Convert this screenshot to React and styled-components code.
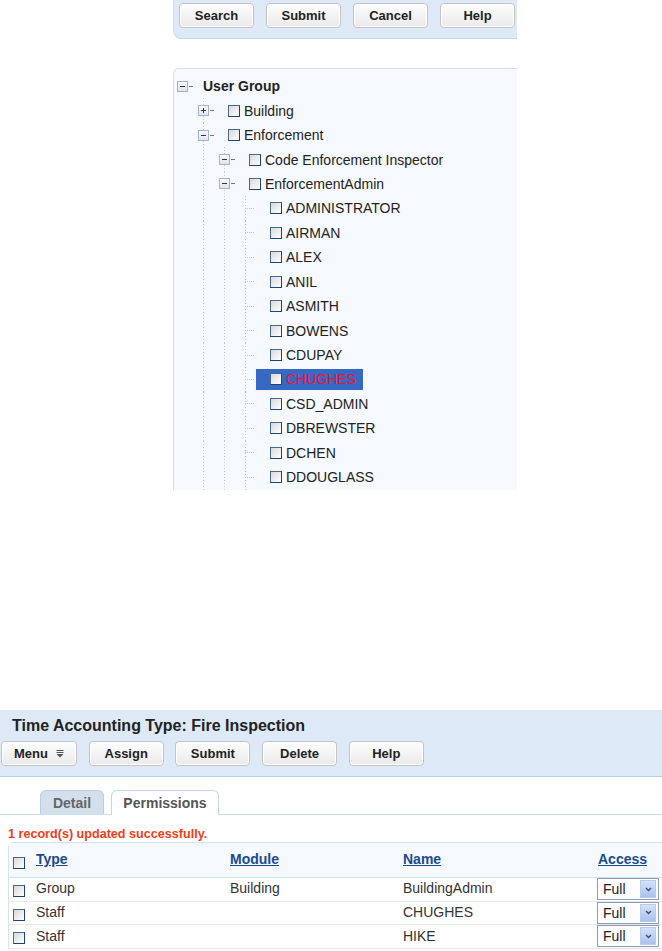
import React from "react";
import styled, { createGlobalStyle } from "styled-components";

const GlobalStyle = createGlobalStyle`
  body {
    margin: 0;
    background: #ffffff;
    font-family: "Liberation Sans", Arial, sans-serif;
  }
  * { box-sizing: border-box; }
`;

const Page = styled.div`
  width: 662px;
  height: 951px;
  overflow: hidden;
  display: flex;
  flex-direction: column;
`;

// top button strip
const SearchBar = styled.div`
  margin-left: 173px;
  width: 344px;
  height: 39px;
  padding: 3px 0 0 5px;
  display: flex;
  gap: 12px;
  background: #dde9f6;
  border-left: 1px solid #cfdded;
  border-bottom: 1px solid #c6d7eb;
  border-bottom-left-radius: 8px;
`;

const Button = styled.button`
  width: ${(p) => p.$w || 75}px;
  height: 25px;
  flex-shrink: 0;
  padding: 0;
  display: flex;
  align-items: center;
  justify-content: center;
  gap: 8px;
  border: 1px solid #c4c4c4;
  border-radius: 4px;
  background: linear-gradient(#fdfdfd, #eaeaea);
  box-shadow: inset 0 0 0 1px #ffffff;
  font: bold 13px "Liberation Sans", Arial, sans-serif;
  color: #222;
`;

// tree
const TreePanel = styled.div`
  margin: 29px 0 0 173px;
  width: 344px;
  height: 422px;
  overflow: hidden;
  padding: 5px 0 0 3px;
  background: #f6f9fd;
  border-top: 1px solid #d3dfec;
  border-left: 1px solid #d3dfec;
  border-top-left-radius: 6px;
`;

const TreeRow = styled.div`
  display: flex;
  align-items: center;
  height: 24.45px;
`;

const vLine = "repeating-linear-gradient(to bottom, #c3c7cd 0 1px, transparent 1px 3px)";
const hLine = "repeating-linear-gradient(to right, #c3c7cd 0 1px, transparent 1px 2px)";

const Indent = styled.span`
  width: 21px;
  height: 100%;
  flex-shrink: 0;
  background-image: ${(p) => (p.$line ? vLine : "none")};
  background-size: 1px 100%;
  background-position: 5px 0;
  background-repeat: no-repeat;
`;

const Toggle = styled.span`
  width: 16px;
  height: 100%;
  flex-shrink: 0;
  display: flex;
  align-items: center;
  background-image: ${(p) =>
    p.$leaf ? `${vLine}, ${hLine}` : p.$line ? vLine : "none"};
  background-size: 1px 100%, 9px 1px;
  background-position: 5px 0, 5px 50%;
  background-repeat: no-repeat;
`;

const Item = styled.span`
  display: flex;
  align-items: center;
  gap: 4px;
  height: 21px;
  padding: 0 7px 0 ${(p) => p.$pad}px;
  background: ${(p) => (p.$selected ? "#3768c4" : "transparent")};
  color: ${(p) => (p.$selected ? "#ee1430" : "#222")};
  font-size: 14px;
  font-weight: ${(p) => (p.$bold ? "bold" : "normal")};
  white-space: nowrap;
`;

const Check = styled.span`
  display: inline-block;
  width: 12px;
  height: 12px;
  flex-shrink: 0;
  margin-top: ${(p) => p.$dy || 0}px;
  border: 1px solid;
  border-color: #46698f #1c4474 #1c4474 #46698f;
  background: linear-gradient(135deg, #d9d9d9, #ffffff);
`;

function Expander({ plus }) {
  return (
    <svg width="16" height="11" viewBox="0 0 16 11">
      <defs>
        <linearGradient id="exg" x1="0" y1="0" x2="0" y2="1">
          <stop offset="0" stopColor="#ffffff" />
          <stop offset="1" stopColor="#dbe3ee" />
        </linearGradient>
      </defs>
      <rect x="0.5" y="0.5" width="10" height="10" fill="url(#exg)" stroke="#a3b4ce" />
      <path d="M3 5.5h5" stroke="#333" />
      {plus && <path d="M5.5 3v5" stroke="#333" />}
      <path d="M12 5.5h4" stroke="#777" />
    </svg>
  );
}

const leaves = [
  "ADMINISTRATOR", "AIRMAN", "ALEX", "ANIL", "ASMITH", "BOWENS", "CDUPAY",
  "CHUGHES", "CSD_ADMIN", "DBREWSTER", "DCHEN", "DDOUGLASS",
];

const tree = [
  { level: 0, label: "User Group", kind: "minus" },
  { level: 1, label: "Building", kind: "plus" },
  { level: 1, label: "Enforcement", kind: "minus" },
  { level: 2, label: "Code Enforcement Inspector", kind: "minus" },
  { level: 2, label: "EnforcementAdmin", kind: "minus" },
  ...leaves.map((l) => ({ level: 3, label: l, kind: "leaf", selected: l === "CHUGHES" })),
];

// record header
const RecordHeader = styled.div`
  margin-top: 220px;
  height: 67px;
  flex-shrink: 0;
  padding: 6px 0 0 1px;
  background: #dde9f6;
  border-bottom: 1px solid #b6cfea;
`;

const RecordTitle = styled.div`
  padding-left: 11px;
  font-size: 16px;
  line-height: 20px;
  font-weight: bold;
  color: #222;
`;

const Toolbar = styled.div`
  display: flex;
  gap: 11.7px;
  margin-top: 5px;
`;

const TabStrip = styled.div`
  margin-top: 13px;
  height: 25px;
  flex-shrink: 0;
  display: flex;
  align-items: flex-end;
  gap: 7px;
  padding-left: 40px;
  border-bottom: 1px solid #cbdcee;
`;

const Tab = styled.div`
  width: ${(p) => p.$w}px;
  height: ${(p) => (p.$active ? 25 : 24)}px;
  margin-bottom: ${(p) => (p.$active ? -1 : 0)}px;
  display: flex;
  align-items: center;
  justify-content: center;
  border: 1px solid ${(p) => (p.$active ? "#c2d6ec" : "#b9cde3")};
  border-bottom: none;
  border-radius: 6px 6px 0 0;
  background: ${(p) => (p.$active ? "#ffffff" : "#d3dfec")};
  font-size: 14px;
  font-weight: bold;
  color: ${(p) => (p.$active ? "#555" : "#666")};
`;

const Message = styled.div`
  margin-top: 11px;
  padding-left: 8px;
  font-size: 12.6px;
  line-height: 16px;
  font-weight: bold;
  color: #f23c17;
`;

const Table = styled.div`
  margin-left: 8px;
  border-top: 1px solid #d5e2ef;
  border-left: 1px solid #d5e2ef;
  border-top-left-radius: 6px;
`;

const Row = styled.div`
  display: grid;
  grid-template-columns: 22px 194px 173px 195px 1fr;
  height: ${(p) => (p.$head ? "35px" : "23.7px")};
  background: ${(p) => (p.$head ? "#f6f9fd" : "#ffffff")};
  border-bottom: 1px solid ${(p) => (p.$head ? "#d3e0ee" : "#e3e8ee")};
`;

const Cell = styled.div`
  display: flex;
  align-items: ${(p) => (p.$top ? "flex-start" : "center")};
  padding-left: ${(p) => (p.$pad != null ? p.$pad : 5)}px;
  padding-bottom: ${(p) => (p.$top ? 0 : 2)}px;
  font-size: 14px;
  color: #333;
  white-space: nowrap;
`;

const HeadLink = styled.a`
  font-weight: bold;
  font-size: 14px;
  color: #1a4b8e;
  text-decoration: underline;
`;

const SelectBox = styled.div`
  width: 62px;
  height: 22px;
  display: flex;
  align-items: center;
  justify-content: space-between;
  padding: 0 2px 0 5px;
  border: 1px solid #8d9db3;
  background: #ffffff;
  font-size: 14px;
  color: #222;
`;

const SelectArrow = styled.span`
  width: 16px;
  height: 18px;
  display: flex;
  align-items: center;
  justify-content: center;
  border: 1px solid #b9cbeb;
  background: linear-gradient(#d4e1f8, #aac2ef);
`;

function MenuGlyph() {
  return (
    <svg width="8" height="8" viewBox="0 0 8 8">
      <path d="M0.5 0.5h7M0.5 2.5h7" stroke="#555" />
      <path d="M0.5 4h7L4 7.5z" fill="#555" />
    </svg>
  );
}

function Chevron() {
  return (
    <svg width="7" height="5" viewBox="0 0 7 5">
      <path d="M1 1l2.5 2.5L6 1" stroke="#3d4f70" strokeWidth="1.4" fill="none" />
    </svg>
  );
}

const rows = [
  { type: "Group", module: "Building", name: "BuildingAdmin" },
  { type: "Staff", module: "", name: "CHUGHES" },
  { type: "Staff", module: "", name: "HIKE" },
];

export default function App() {
  return (
    <Page>
      <GlobalStyle />
      <SearchBar>
        <Button>Search</Button>
        <Button>Submit</Button>
        <Button>Cancel</Button>
        <Button>Help</Button>
      </SearchBar>

      <TreePanel>
        {tree.map((n, i) => (
          <TreeRow key={i}>
            {Array.from({ length: n.level }).map((_, k) => (
              <Indent key={k} $line={k >= 1} />
            ))}
            <Toggle $line={n.level >= 1} $leaf={n.kind === "leaf"}>
              {n.kind !== "leaf" && <Expander plus={n.kind === "plus"} />}
            </Toggle>
            <Item $pad={n.level === 0 ? 10 : 14} $bold={n.level === 0} $selected={n.selected}>
              {n.level > 0 && <Check />}
              {n.label}
            </Item>
          </TreeRow>
        ))}
        <TreeRow>
          <Indent />
          <Indent $line />
          <Indent $line />
          <Toggle $line />
        </TreeRow>
      </TreePanel>

      <RecordHeader>
        <RecordTitle>Time Accounting Type: Fire Inspection</RecordTitle>
        <Toolbar>
          <Button $w={76}>
            Menu <MenuGlyph />
          </Button>
          <Button>Assign</Button>
          <Button>Submit</Button>
          <Button>Delete</Button>
          <Button>Help</Button>
        </Toolbar>
      </RecordHeader>

      <TabStrip>
        <Tab $w={64}>Detail</Tab>
        <Tab $w={108} $active>Permissions</Tab>
      </TabStrip>

      <Message>1 record(s) updated successfully.</Message>

      <Table>
        <Row $head>
          <Cell $pad={4}>
            <Check $dy={7} />
          </Cell>
          <Cell><HeadLink href="#">Type</HeadLink></Cell>
          <Cell><HeadLink href="#">Module</HeadLink></Cell>
          <Cell><HeadLink href="#">Name</HeadLink></Cell>
          <Cell><HeadLink href="#">Access</HeadLink></Cell>
        </Row>
        {rows.map((r, i) => (
          <Row key={i}>
            <Cell $pad={4}>
              <Check $dy={5} />
            </Cell>
            <Cell>{r.type}</Cell>
            <Cell>{r.module}</Cell>
            <Cell>{r.name}</Cell>
            <Cell $pad={4} $top>
              <SelectBox>
                Full
                <SelectArrow>
                  <Chevron />
                </SelectArrow>
              </SelectBox>
            </Cell>
          </Row>
        ))}
      </Table>
    </Page>
  );
}
